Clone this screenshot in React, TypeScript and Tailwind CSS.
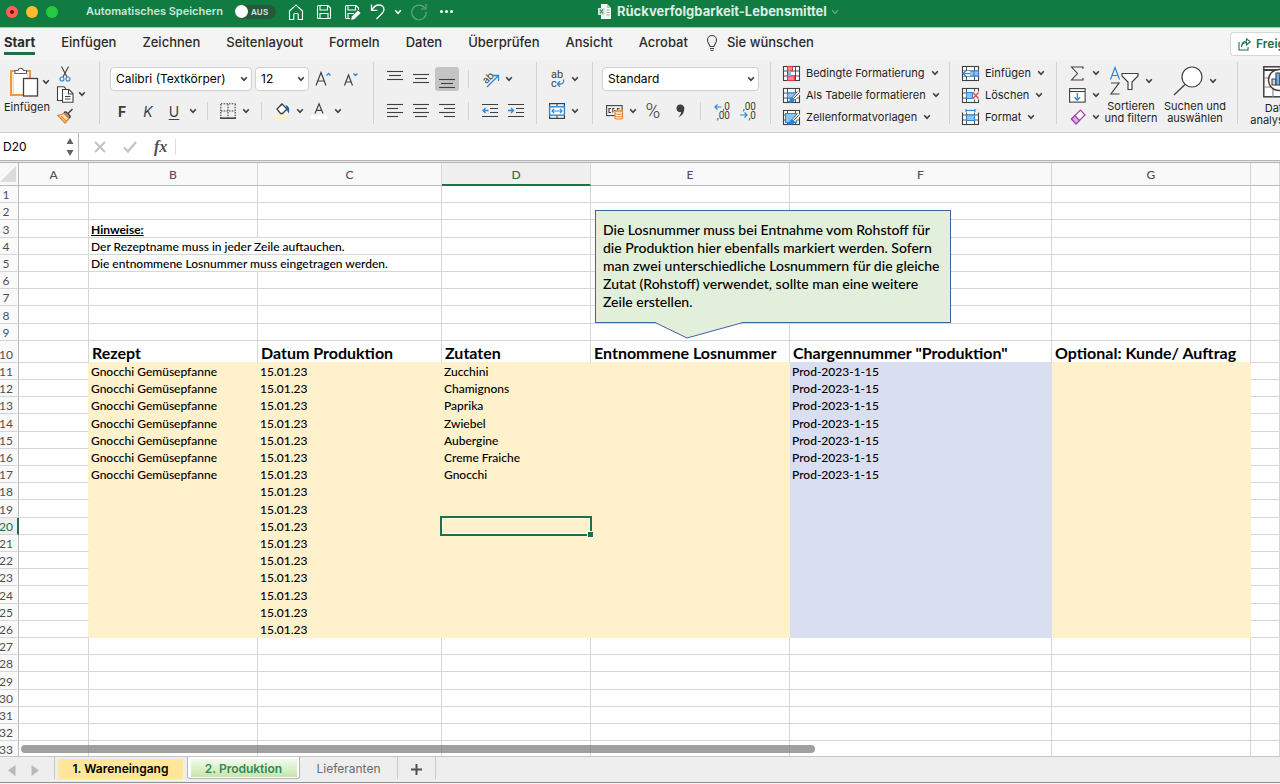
import React from 'react';

type Kids = { children?: React.ReactNode };

const DARK = '#404040';
const BLUE = '#2b88d8';

function Svg({ w, h, className = '', children }: Kids & { w: number; h: number; className?: string }) {
  return (
    <svg
      width={w}
      height={h}
      viewBox={`0 0 ${w} ${h}`}
      fill="none"
      stroke={DARK}
      strokeWidth={1.1}
      className={`shrink-0 overflow-visible ${className}`}
      aria-hidden="true"
    >
      {children}
    </svg>
  );
}

function Chevron({ className = '' }: { className?: string }) {
  return (
    <Svg w={8} h={6} className={className}>
      <path d="M1.2 1.2 4 4.4 6.8 1.2" strokeWidth={1.6} />
    </Svg>
  );
}

function Tool({ label, className = 'w-6', children }: Kids & { label: string; className?: string }) {
  return (
    <button type="button" aria-label={label} className={`flex h-6 shrink-0 items-center justify-center ${className}`}>
      {children}
    </button>
  );
}

function More({ label }: { label: string }) {
  return (
    <Tool label={label} className="w-3">
      <Chevron />
    </Tool>
  );
}

function Rule({ className = 'w-4' }: { className?: string }) {
  return (
    <span className={`flex h-6 shrink-0 items-center justify-center ${className}`}>
      <span className="h-[18px] w-px bg-[#d2d2d2]" />
    </span>
  );
}

function Group({ className = '', children }: Kids & { className?: string }) {
  return <div className={`flex h-[62px] shrink-0 border-r border-[#d2d2d2] ${className}`}>{children}</div>;
}

function Lines({ rows }: { rows: [number, number, number][] }) {
  return (
    <Svg w={16} h={16}>
      {rows.map(([x1, x2, y]) => (
        <path key={y} d={`M${x1} ${y}H${x2}`} />
      ))}
    </Svg>
  );
}

function Dropdown({ label, value, className }: { label: string; value: string; className: string }) {
  return (
    <span className={`relative flex h-6 shrink-0 ${className}`}>
      <select
        aria-label={label}
        defaultValue={value}
        className="h-6 w-full appearance-none rounded-[4px] border border-[#d0d0d0] bg-white pl-[5px] text-[12px] text-black"
      >
        <option>{value}</option>
      </select>
      <Chevron className="pointer-events-none absolute top-[9px] right-1" />
    </span>
  );
}

function TitleBar() {
  return (
    <header className="flex h-7 shrink-0 items-start overflow-hidden border-b border-[#9fcbb1] bg-[#107c41] text-white">
      <div className="flex h-[23px] shrink-0 items-center pl-[6px]">
        <div className="flex gap-2">
          <button type="button" aria-label="Schließen" className="flex size-3 items-center justify-center rounded-full bg-[#ff5f57]">
            <span className="size-1 rounded-full bg-[#7a0c05]" />
          </button>
          <button type="button" aria-label="Minimieren" className="size-3 rounded-full bg-[#febc2e]" />
          <button type="button" aria-label="Maximieren" className="size-3 rounded-full bg-[#28c840]" />
        </div>
        <label htmlFor="autosave" className="ml-7 text-[11px] font-semibold whitespace-nowrap text-[#cfe5d8]">
          Automatisches Speichern
        </label>
        <span className="relative ml-3 flex h-[14px] w-[41px] items-center rounded-full bg-[#24593c]">
          <input id="autosave" type="checkbox" role="switch" className="absolute inset-0 size-full opacity-0" />
          <span className="size-[13px] rounded-full bg-white" />
          <span className="ml-[3px] text-[8px] font-semibold tracking-wide text-[#dbe9e1]">AUS</span>
        </span>
        <div className="ml-3 flex items-center text-white">
          <button type="button" aria-label="Startseite" className="mr-3">
            <Svg w={16} h={16}>
              <path d="M1.500 7 8 1.200 14.500 7v8.500h-4.300V10.500a1 1 0 0 0-1-1H6.800a1 1 0 0 0-1 1v5H1.500z" stroke="#fff" strokeLinejoin="round" />
            </Svg>
          </button>
          <button type="button" aria-label="Sichern" className="mr-3">
            <Svg w={16} h={16}>
              <path d="M1.500 2.500a1 1 0 0 1 1-1h9.500l2.500 2.500v9.500a1 1 0 0 1-1 1h-11a1 1 0 0 1-1-1zM4 1.500v4.500h7.500V1.500M4 14.500V9.500h8v5" stroke="#fff" />
            </Svg>
          </button>
          <button type="button" aria-label="Sichern unter" className="mr-2.5">
            <Svg w={16} h={16}>
              <path d="M14.500 6V4L12 1.500H2.500a1 1 0 0 0-1 1v11a1 1 0 0 0 1 1H6M4 1.500v4.500h7.500V1.500M4 14.500V9.500h6" stroke="#fff" />
              <path d="M7.500 15.500 8.300 12.300 14 6.800l2.300 2.300-5.700 5.600z" fill="#fff" stroke="#fff" strokeWidth={0.6} />
            </Svg>
          </button>
          <button type="button" aria-label="Rückgängig" className="mr-2">
            <Svg w={16} h={18}>
              <path d="M1.500 1.500v5.800h5.800M1.800 7C3.500 4 6 2 9 2c3 0 5 2 5 4.500 0 2-1 3-2.500 4.500L6.500 16" stroke="#fff" strokeWidth={1.3} />
            </Svg>
          </button>
          <button type="button" aria-label="Rückgängig-Liste" className="mr-2">
            <svg width="8" height="6" viewBox="0 0 8 6" fill="none" stroke="#fff" strokeWidth="1.600">
              <path d="M1.200 1.200 4 4.400 6.800 1.200" />
            </svg>
          </button>
          <button type="button" aria-label="Wiederholen" className="mr-3">
            <Svg w={18} h={18}>
              <path d="M14.800 5A7.300 7.300 0 1 0 16.300 9M16 1v5h-5" stroke="#5fa77f" strokeWidth={1.2} />
            </Svg>
          </button>
          <button type="button" aria-label="Mehr" className="flex gap-[2px]">
            <span className="size-[3px] rounded-full bg-white" />
            <span className="size-[3px] rounded-full bg-white" />
            <span className="size-[3px] rounded-full bg-white" />
          </button>
        </div>
      </div>
      <button type="button" className="ml-[145px] flex h-[23px] shrink-0 items-center text-[13px] font-bold whitespace-nowrap text-[#dcede3]">
        <svg width="13" height="15" viewBox="0 0 13 15" className="mr-[6px]" aria-hidden="true">
          <path d="M3 0h6l4 4v11H3z" fill="#f4faf6" />
          <path d="M9 0v4h4z" fill="#a8cdb8" />
          <rect x="0" y="4" width="7" height="7" fill="#cfe3d7" />
          <path d="M2 5.500l3 4M5 5.500l-3 4" stroke="#2d8a57" strokeWidth="1.100" />
          <path d="M8.500 6h3M8.500 8.500h3M8.500 11h3" stroke="#7cb795" />
        </svg>
        Rückverfolgbarkeit-Lebensmittel
        <svg width="8" height="6" viewBox="0 0 8 6" fill="none" stroke="#6fb08c" strokeWidth="1.200" className="ml-1" aria-hidden="true">
          <path d="M1 1.200 4 4.400 7 1.200" />
        </svg>
      </button>
    </header>
  );
}

const ribbonTabs = ['Einfügen', 'Zeichnen', 'Seitenlayout', 'Formeln', 'Daten', 'Überprüfen', 'Ansicht', 'Acrobat'];

function RibbonTabs() {
  return (
    <nav className="flex h-8 shrink-0 items-start gap-[26px] overflow-hidden bg-[#f4f4f4] pl-1 text-[13px] font-medium whitespace-nowrap text-[#2b2b2b]">
      <button type="button" className="h-[27px] border-b-[3px] border-[#1e7145] pt-[5px] font-bold">
        Start
      </button>
      {ribbonTabs.map((tab) => (
        <button key={tab} type="button" className="h-[29px]">
          {tab}
        </button>
      ))}
      <button type="button" className="-ml-2 flex h-[29px] items-center gap-[9px]">
        <Svg w={12} h={18}>
          <path d="M4 12.500c0-2-2.500-3-2.500-6.500a4.500 4.500 0 0 1 9 0c0 3.500-2.500 4.500-2.500 6.500zM4 14.500h4M4.500 16.500h3" />
        </Svg>
        Sie wünschen
      </button>
      <button
        type="button"
        className="mt-1 ml-auto flex h-6 w-[50px] shrink-0 items-center gap-[5px] overflow-hidden rounded-l-[4px] border border-r-0 border-[#d8d8d8] bg-white pl-[7px] text-[12px] font-semibold text-[#1e7145]"
      >
        <Svg w={13} h={13}>
          <path d="M1 4v8h9V9M3.500 9C4 6 6 4.500 8.500 4.500V7L12.300 3.700 8.500.8V3C5.500 3 3.500 5 3.500 9z" stroke="#1e7145" />
        </Svg>
        Freigeben
      </button>
    </nav>
  );
}

function GridIcon({ children }: Kids) {
  return (
    <Svg w={17} h={15}>
      <rect x="0.500" y="0.500" width="16" height="14" fill="#fff" />
      <path d="M.5 5H16.500M.5 10H16.500M4.500.5v14M12.500.5v14" strokeWidth={0.9} />
      {children}
    </Svg>
  );
}

function Brush() {
  return (
    <>
      <path d="M16.500 4 10 10.500" stroke="#fff" strokeWidth={4} />
      <path d="M16.500 4.500 10.500 10.500M14.500 3.500 9.500 9" strokeWidth={1} />
      <path d="M9.500 9.500c-2 0-2.300 1.500-2.500 3-.3 1-1 1.200-2 1.200 2 1 6 1 6.500-2.200z" fill="#2b88d8" stroke="#2472b8" strokeWidth={0.8} />
    </>
  );
}

function ListTool({ icon, text }: { icon: React.ReactNode; text: string }) {
  return (
    <button type="button" className="flex h-[22px] shrink-0 items-center text-[11px] whitespace-nowrap text-[#1f1f1f]">
      {icon}
      <span className="mr-[6px] ml-[6px]">{text}</span>
      <Chevron />
    </button>
  );
}

function Ribbon() {
  return (
    <section className="flex h-[73px] shrink-0 overflow-hidden border-b border-[#cfcfcf] bg-[#f0f0f0] pt-[2px]">
      <Group className="w-[100px]">
        <button type="button" className="flex w-[54px] flex-col items-center pt-1 text-[11px] text-[#1f1f1f]">
          <span className="flex items-center gap-[3px] pl-1">
            <Svg w={30} h={32}>
              <rect x="2" y="5" width="19" height="24" fill="#fff" stroke="#f0963c" strokeWidth={2} />
              <path d="M4.200 7v21M18.800 7v21" stroke="#fbdca8" strokeWidth={1.5} />
              <path d="M6 7.500V4.500h3a2.800 2.800 0 0 1 5.500 0h3v3z" fill="#fff" stroke="#606060" />
              <rect x="14.500" y="12.500" width="14" height="17.500" fill="#fff" strokeWidth={1.3} />
            </Svg>
            <Chevron />
          </span>
          <span className="mt-[3px] leading-3">Einfügen</span>
        </button>
        <div className="flex flex-col">
          <Tool label="Ausschneiden" className="w-[22px]">
            <Svg w={12} h={16}>
              <path d="M2.500.5 8 11M9.500.5 4 11" />
              <circle cx="3" cy="13" r="2" stroke={BLUE} />
              <circle cx="9" cy="13" r="2" stroke={BLUE} />
            </Svg>
          </Tool>
          <div className="-mt-1 flex">
            <Tool label="Kopieren" className="w-[22px]">
              <Svg w={18} h={17}>
                <path d="M6 14.500H1.500V.8H8l2 2" fill="#fff" />
                <path d="M6.500 3.500H13l4 4v8.700H6.500z" fill="#fff" />
                <path d="M12.500 3.500V8H17M9 10.500h5.500M9 13h5.500" />
              </Svg>
            </Tool>
            <More label="Kopieroptionen" />
          </div>
          <Tool label="Format übertragen" className="-mt-0.5 w-[22px]">
            <Svg w={17} h={16}>
              <path d="M15.500 1 11 5.500M8.500 3.500l5 5M7 5l5 5 1.500-1.500M7 5 8.500 3.500" strokeWidth={1.5} />
              <path d="M7 5.500 1 7.500l7 7.500 4-4.500z" fill="#fde3c4" stroke="#e8852a" strokeWidth={1.3} />
              <path d="m4 8 5 5" stroke="#e8852a" />
            </Svg>
          </Tool>
        </div>
      </Group>

      <Group className="w-[274px] flex-col gap-2 pt-[5px] pl-[9px]">
        <div className="flex pl-[1px]">
          <Dropdown label="Schriftart" value="Calibri (Textkörper)" className="w-[142px]" />
          <Dropdown label="Schriftgrad" value="12" className="ml-[3px] w-[54px]" />
          <Tool label="Schrift vergrößern" className="w-7">
            <Svg w={16} h={16}>
              <path d="M1 14.500 6 1.500l5 13M2.800 10h6.400" strokeWidth={1.2} />
              <path d="m11.500 4.500 2-2 2 2" stroke={BLUE} strokeWidth={1.3} />
            </Svg>
          </Tool>
          <Tool label="Schrift verkleinern" className="w-7">
            <Svg w={16} h={16}>
              <path d="M1.500 14.500 5.500 4l4 10.500M3 11h5" strokeWidth={1.2} />
              <path d="m10.500 2.500 2 2 2-2" stroke={BLUE} strokeWidth={1.3} />
            </Svg>
          </Tool>
        </div>
        <div className="flex text-[14px] text-[#404040]">
          <Tool label="Fett" className="w-[26px] font-bold">F</Tool>
          <Tool label="Kursiv" className="w-[26px] italic">K</Tool>
          <Tool label="Unterstrichen" className="w-[26px] underline underline-offset-2">U</Tool>
          <More label="Unterstreichungsarten" />
          <Rule className="w-[17px]" />
          <Tool label="Rahmen">
            <Svg w={16} h={16}>
              <path d="M1 .8H15.500M.8 1V15M15.200 1V15M8 1V15M1 8H15" strokeDasharray="1.500 1.200" />
              <path d="M0 15.200H16" strokeWidth={1.6} />
            </Svg>
          </Tool>
          <More label="Rahmenoptionen" />
          <Rule className="w-[18px]" />
          <Tool label="Füllfarbe">
            <Svg w={16} h={16}>
              <path d="m3 6 5-5 5 5-4.500 4.500H6.500z" fill="#fff" strokeWidth={1.3} />
              <path d="M6 3 8 1" />
              <path d="M12.500 3c2 1 2.500 3 2 6-1-1.500-1.500-2.500-1.500-4z" fill="#1d5fa8" stroke="#1d5fa8" />
              <rect x="0" y="12.500" width="16" height="3.500" fill="#fdefc4" stroke="none" />
            </Svg>
          </Tool>
          <More label="Füllfarben" />
          <Tool label="Schriftfarbe" className="w-[26px]">
            <Svg w={16} h={16}>
              <path d="M4 10.500 8 .8l4 9.700M5.500 7.300h5" strokeWidth={1.2} />
              <rect x="0" y="12.500" width="16" height="3.500" fill="#fff" stroke="none" />
            </Svg>
          </Tool>
          <More label="Schriftfarben" />
        </div>
      </Group>

      <Group className="w-[163px] flex-col gap-2 pt-[5px] pl-[9px]">
        <div className="flex">
          <div className="flex gap-0.5">
            <Tool label="Oben ausrichten">
              <Lines rows={[[0, 16, 0.5], [2, 14, 4.5], [0, 16, 8.5]]} />
            </Tool>
            <Tool label="Zentriert ausrichten">
              <Lines rows={[[0, 16, 3.5], [2, 14, 7.5], [0, 16, 11.5]]} />
            </Tool>
            <Tool label="Unten ausrichten" className="w-6 rounded-[3px] bg-[#c4c4c4]">
              <Lines rows={[[0, 16, 8.5], [2, 14, 12.5], [0, 16, 16.5]]} />
            </Tool>
          </div>
          <Rule className="w-[18px]" />
          <Tool label="Ausrichtung" className="w-[26px]">
            <Svg w={18} h={18}>
              <text x="1" y="12" fontSize="10" fill={DARK} stroke="none" transform="rotate(-45 6 8)">ab</text>
              <path d="M6 17 17 6M12 5.500h5.500v5.500" stroke={BLUE} strokeWidth={1.3} />
            </Svg>
          </Tool>
          <More label="Ausrichtungsoptionen" />
        </div>
        <div className="flex">
          <div className="flex gap-0.5">
            <Tool label="Linksbündig">
              <Lines rows={[[0, 16, 1.5], [0, 11, 5.5], [0, 16, 9.5], [0, 11, 13.5]]} />
            </Tool>
            <Tool label="Zentriert">
              <Lines rows={[[0, 16, 1.5], [2, 14, 5.5], [0, 16, 9.5], [2, 14, 13.5]]} />
            </Tool>
            <Tool label="Rechtsbündig">
              <Lines rows={[[0, 16, 1.5], [5, 16, 5.5], [0, 16, 9.5], [5, 16, 13.5]]} />
            </Tool>
          </div>
          <Rule className="w-[18px]" />
          <Tool label="Einzug verkleinern" className="w-[26px]">
            <Svg w={16} h={16}>
              <path d="M0 1.500H16M8 5.500h8M8 9.500h8M0 13.500H16" />
              <path d="M6.500 7.500H1M3.500 5 1 7.500 3.500 10" stroke={BLUE} strokeWidth={1.3} />
            </Svg>
          </Tool>
          <Tool label="Einzug vergrößern" className="w-[26px]">
            <Svg w={16} h={16}>
              <path d="M0 1.500H16M8 5.500h8M8 9.500h8M0 13.500H16" />
              <path d="M0 7.500H5.500M3 5l2.500 2.500L3 10" stroke={BLUE} strokeWidth={1.3} />
            </Svg>
          </Tool>
        </div>
      </Group>

      <Group className="w-14 flex-col gap-2 pt-[5px] pl-2">
        <div className="flex">
          <Tool label="Textumbruch">
            <Svg w={16} h={18}>
              <text x="2" y="8" fontSize="11" fill={DARK} stroke="none" className="font-['Roboto',sans-serif]">
                ab
              </text>
              <text x="2" y="17" fontSize="11" fill={DARK} stroke="none" className="font-['Roboto',sans-serif]">
                c
              </text>
              <path d="M14.500 9.500c1 3-1 4.500-3 4.500H8.500M11 11.300 8.300 14l2.700 2.700" stroke={BLUE} strokeWidth={1.3} />
            </Svg>
          </Tool>
          <More label="Umbruchoptionen" />
        </div>
        <div className="flex">
          <Tool label="Verbinden">
            <Svg w={16} h={16}>
              <rect x="0.600" y="0.600" width="14.800" height="14.800" strokeWidth={1.2} />
              <path d="M8 .5v3M8 12.500v3" />
              <rect x="0.600" y="3.800" width="14.800" height="8.400" fill="#fff" stroke={BLUE} strokeWidth={1.4} />
              <path d="M3 8h10M5 6 3 8l2 2M11 6l2 2-2 2" stroke={BLUE} />
            </Svg>
          </Tool>
          <More label="Verbindungsoptionen" />
        </div>
      </Group>

      <Group className="w-[178px] flex-col gap-2 pt-[5px] pl-[9px]">
        <Dropdown label="Zahlenformat" value="Standard" className="w-[157px]" />
        <div className="flex text-[#404040]">
          <Tool label="Währung" className="w-[25px]">
            <Svg w={18} h={16}>
              <rect x="0.600" y="2.600" width="15.500" height="10" />
              <path d="M5 5.500H3v4h2M8.500 5.500H6.800v4M8 7.500h2M13.500 5.500h-2v3" />
              <path d="M9 8c0-1.300 7.500-1.300 7.500 0v7c0 1.300-7.500 1.300-7.500 0z" fill="#fff" stroke="#ed8733" strokeWidth={1.2} />
              <path d="M9 10.500c2 1 5.500 1 7.500 0M9 13c2 1 5.500 1 7.500 0M9 8c2 1 5.500 1 7.500 0" stroke="#ed8733" strokeWidth={1.2} />
            </Svg>
          </Tool>
          <More label="Währungen" />
          <Tool label="Prozent" className="w-7 font-['Roboto',sans-serif] text-[20px] font-light">%</Tool>
          <Tool label="Tausendertrennzeichen" className="w-[26px]">
            <svg width="9" height="14" viewBox="0 0 9 14" fill={DARK} aria-hidden="true">
              <path d="M4 .5a3.700 3.700 0 0 1 4.300 4c0 4.500-2.500 7.500-6.300 9 2-2 3-3.500 3-5.500C2 8.800.5 6.500.5 4.300A3.500 3.500 0 0 1 4 .5z" />
            </svg>
          </Tool>
          <Rule className="w-[15px]" />
          <Tool label="Dezimalstelle hinzufügen" className="w-[27px]">
            <Svg w={16} h={16}>
              <text x="16" y="7" fontSize="10" textAnchor="end" fill={DARK} stroke="none" className="font-['Roboto',sans-serif]">
                ,0
              </text>
              <text x="16" y="16" fontSize="10" textAnchor="end" fill={DARK} stroke="none" className="font-['Roboto',sans-serif]">
                ,00
              </text>
              <path d="M7.500 4H1M3.500 1.500 1 4l2.500 2.500" stroke={BLUE} strokeWidth={1.2} />
            </Svg>
          </Tool>
          <Tool label="Dezimalstelle entfernen" className="w-[26px]">
            <Svg w={16} h={16}>
              <text x="16" y="7" fontSize="10" textAnchor="end" fill={DARK} stroke="none" className="font-['Roboto',sans-serif]">
                ,00
              </text>
              <text x="16" y="16" fontSize="10" textAnchor="end" fill={DARK} stroke="none" className="font-['Roboto',sans-serif]">
                ,0
              </text>
              <path d="M0 12H7M4.500 9.500 7 12l-2.500 2.500" stroke={BLUE} strokeWidth={1.2} />
            </Svg>
          </Tool>
        </div>
      </Group>

      <Group className="w-[179px] flex-col pl-3">
        <ListTool
          text="Bedingte Formatierung"
          icon={
            <GridIcon>
              <path d="M4.500.5h5v4.500h-5zM4.500 10h7v4.500h-7z" fill="#f58b8b" stroke="#d9363e" />
              <path d="M5 5h3v5H5z" fill="#7ab8ec" stroke="none" />
            </GridIcon>
          }
        />
        <ListTool
          text="Als Tabelle formatieren"
          icon={
            <GridIcon>
              <path d="M4.500 5h8v5h-8z" fill="#8cc4f2" stroke={BLUE} />
              <Brush />
            </GridIcon>
          }
        />
        <ListTool
          text="Zellenformatvorlagen"
          icon={
            <GridIcon>
              <path d="M2.500 3.500h11v9h-11z" fill="#8cc4f2" stroke={BLUE} />
              <Brush />
            </GridIcon>
          }
        />
      </Group>

      <Group className="w-[107px] flex-col pl-3">
        <ListTool
          text="Einfügen"
          icon={
            <GridIcon>
              <path d="M7 5h9.500v5H7z" fill="#8cc4f2" stroke={BLUE} />
              <path d="M8 7.500H1" stroke="#f0f0f0" strokeWidth={5} />
              <path d="M8.500 7.500H1M4 4.500l-3 3 3 3M12 5v5" stroke={BLUE} strokeWidth={1.2} />
            </GridIcon>
          }
        />
        <ListTool
          text="Löschen"
          icon={
            <GridIcon>
              <path d="M4.500 4.500h6v6h-6z" fill="#8cc4f2" stroke={BLUE} />
              <path d="M11 3.500h6.500v8H11z" fill="#f0f0f0" stroke="none" />
              <path d="m11 4.500 5.500 6M16.500 4.500l-5.500 6" stroke="#e5484d" strokeWidth={1.3} />
            </GridIcon>
          }
        />
        <ListTool
          text="Format"
          icon={
            <GridIcon>
              <path d="M0 0h17v2.500H0z" fill="#f0f0f0" stroke="none" />
              <path d="M4.500 5h8v5.500h-8z" fill="#8cc4f2" stroke={BLUE} />
              <path d="M4 .5h9M4-1v3M13-1v3" stroke={BLUE} />
            </GridIcon>
          }
        />
      </Group>

      <Group className="w-[181px] pl-2">
        <div className="flex flex-col">
          <div className="flex h-[22px] shrink-0 items-center">
            <Tool label="Summe" className="w-[25px]">
              <Svg w={15} h={15}>
                <path d="M13 3V1H1.500L7.500 7.500 1.500 14H13v-2" />
              </Svg>
            </Tool>
            <More label="Summenfunktionen" />
          </div>
          <div className="flex h-[22px] shrink-0 items-center">
            <Tool label="Ausfüllen" className="w-[25px]">
              <Svg w={17} h={15}>
                <rect x="0.600" y="0.600" width="15.500" height="13.500" fill="#fff" />
                <path d="M.5 3.500H16" />
                <path d="M8.300 5v7M5.500 9.300 8.300 12l2.800-2.700" stroke={BLUE} strokeWidth={1.3} />
              </Svg>
            </Tool>
            <More label="Ausfülloptionen" />
          </div>
          <div className="flex h-[22px] shrink-0 items-center">
            <Tool label="Löschen" className="w-[25px]">
              <Svg w={16} h={16}>
                <path d="m1.500 10 9-9 4.500 5-9 9z" fill="#fff" stroke="#a33fb0" strokeWidth={1.2} />
                <path d="m1.500 10 3.500-3.500L9.500 11.500 6 15z" fill="#dfaee6" stroke="#a33fb0" strokeWidth={1.2} />
              </Svg>
            </Tool>
            <More label="Löschoptionen" />
          </div>
        </div>
        <button type="button" className="flex w-[58px] flex-col items-center text-[11px] leading-3 text-[#1f1f1f]">
          <span className="flex h-10 items-center gap-[6px]">
            <Svg w={30} h={30}>
              <path d="m1.500 13.500 4.500-12 4.500 12M3 9.500h6" stroke={BLUE} strokeWidth={1.2} />
              <path d="M2 17h8L2 28h8.500" strokeWidth={1.2} />
              <path d="M13 7.500h16V10l-6 6v7.500h-4V16l-6-6z" fill="#fff" strokeWidth={1.2} />
            </Svg>
            <Chevron />
          </span>
          <span className="whitespace-nowrap">Sortieren</span>
          <span className="whitespace-nowrap">und filtern</span>
        </button>
        <button type="button" className="ml-[2px] flex w-[66px] flex-col items-center text-[11px] leading-3 text-[#1f1f1f]">
          <span className="flex h-10 items-center gap-[6px]">
            <Svg w={30} h={30}>
              <circle cx="19" cy="11" r="10" fill="#fff" strokeWidth={1.2} />
              <path d="M12 18.500 1 29" strokeWidth={1.3} />
            </Svg>
            <Chevron />
          </span>
          <span className="whitespace-nowrap">Suchen und</span>
          <span className="whitespace-nowrap">auswählen</span>
        </button>
      </Group>

      <button type="button" className="ml-[11px] flex w-[62px] shrink-0 flex-col items-center text-[11px] leading-3 text-[#1f1f1f]">
        <span className="flex h-10 items-center pl-1">
          <Svg w={38} h={32}>
            <rect x="0.800" y="0.800" width="34" height="30" fill="#fff" strokeWidth={1.5} />
            <path d="M1 4h34" strokeWidth={2} />
            <path d="M1 12h34M1 21h34M10 5v26M24 5v26" stroke="#808080" />
            <circle cx="16" cy="14" r="10.500" fill="#fff" strokeWidth={1.4} />
            <path d="M9 13h4v6H9z" fill="#d0d0d0" />
            <path d="M13 7h4v12h-4z" fill="#6fb2ea" />
            <path d="M17 10h4v9h-4z" fill="#fff" />
          </Svg>
        </span>
        <span>Daten</span>
        <span>analysieren</span>
      </button>
    </section>
  );
}

function FormulaBar() {
  return (
    <section className="flex h-[30px] shrink-0 flex-col bg-white">
      <div className="flex flex-1 items-center">
        <div className="flex h-full w-[79px] items-center border-r border-[#b5b5b5] pr-1">
          <input
            aria-label="Namenfeld"
            defaultValue="D20"
            className="w-full min-w-0 flex-1 bg-transparent pl-[3px] text-[12px] text-black outline-none"
          />
          <svg width="8" height="18" viewBox="0 0 8 18" fill="#636363" aria-hidden="true">
            <path d="M4 0l3.500 6h-7zM4 18l3.500-6h-7z" />
          </svg>
        </div>
        <div className="flex items-center gap-[17px] border-r border-[#dcdcdc] pr-2 pl-[15px]">
          <button type="button" aria-label="Abbrechen">
            <svg width="12" height="12" viewBox="0 0 12 12" stroke="#c2c2c2" strokeWidth="2" aria-hidden="true">
              <path d="M1 1l10 10M11 1 1 11" />
            </svg>
          </button>
          <button type="button" aria-label="Eingeben">
            <svg width="14" height="12" viewBox="0 0 14 12" fill="none" stroke="#c2c2c2" strokeWidth="2.200" aria-hidden="true">
              <path d="M1 6.500 5 10.500 13 1" />
            </svg>
          </button>
          <button type="button" className="font-['Liberation_Serif',serif] text-[16px] leading-4 font-bold text-[#505050] italic">
            fx
          </button>
        </div>
        <input aria-label="Bearbeitungsleiste" className="h-full flex-1 bg-transparent px-2 text-[12px] outline-none" />
      </div>
      <div className="h-[3px] border-y border-[#b5b5b5] bg-[#e6e6e6]" />
    </section>
  );
}

const columns = ['A', 'B', 'C', 'D', 'E', 'F', 'G', ''];

const cells: Record<string, string> = {
  B3: 'Hinweise:',
  B4: 'Der Rezeptname muss in jeder Zeile auftauchen.',
  B5: 'Die entnommene Losnummer muss eingetragen werden.',
  B10: 'Rezept',
  C10: 'Datum Produktion',
  D10: 'Zutaten',
  E10: 'Entnommene Losnummer',
  F10: 'Chargennummer "Produktion"',
  G10: 'Optional: Kunde/ Auftrag',
};
['Zucchini', 'Chamignons', 'Paprika', 'Zwiebel', 'Aubergine', 'Creme Fraiche', 'Gnocchi'].forEach((item, i) => {
  cells[`B${11 + i}`] = 'Gnocchi Gemüsepfanne';
  cells[`D${11 + i}`] = item;
  cells[`F${11 + i}`] = 'Prod-2023-1-15';
});
for (let r = 11; r <= 26; r++) cells[`C${r}`] = '15.01.23';

// Regular rows are a little over 17px tall; every fifth one takes up the remainder.
function rowHeight(r: number) {
  if (r === 10) return 'h-[22px]';
  const n = r < 10 ? r : r - 11;
  return n % 5 === 3 ? 'h-[18px]' : 'h-[17px]';
}

function cellStyle(col: string, r: number) {
  const filled = r >= 11 && r <= 26;
  const inTable = 'BCDEFG'.includes(col) && col !== '';
  if (filled && inTable) {
    return col === 'F' ? 'bg-[#d9dff1] border-[#d9dff1]' : 'bg-[#fff1cc] border-[#fff1cc]';
  }
  if (filled && col === 'A') return 'border-b-[#d6d6d6] border-r-[#fff1cc]';
  if (r === 10 && inTable) {
    return col === 'F' ? 'border-r-[#d6d6d6] border-b-[#d9dff1]' : 'border-r-[#d6d6d6] border-b-[#fff1cc]';
  }
  if ((r === 4 || r === 5) && col === 'B') return 'border-b-[#d6d6d6] border-r-transparent';
  return 'border-[#d6d6d6]';
}

function textStyle(r: number) {
  if (r === 10) return 'pl-[3px] pt-[2px] text-[16px] leading-4 font-bold';
  if (r === 3) return 'pl-[2px] pt-[2px] text-[12px] leading-[14px] font-bold underline';
  return 'pl-[2px] pt-[2px] text-[12px] leading-[14px] font-medium';
}

function Sheet() {
  return (
    <main className="relative min-h-0 flex-1 overflow-hidden bg-white">
      <table className="w-full table-fixed border-separate border-spacing-0 font-['Lato',sans-serif] text-black">
        <colgroup>
          <col className="w-[19px]" />
          <col className="w-[70px]" />
          <col className="w-[169px]" />
          <col className="w-[184px]" />
          <col className="w-[149px]" />
          <col className="w-[199px]" />
          <col className="w-[262px]" />
          <col className="w-[199px]" />
          <col />
        </colgroup>
        <thead>
          <tr className="h-[23px]">
            <th className="border-r border-b border-[#b9b9b9] bg-[#f8f8f8] p-0">
              <svg width="18" height="16" viewBox="0 0 18 16" aria-hidden="true">
                <path d="M16 0v16H0z" fill="#dcdcdc" />
              </svg>
            </th>
            {columns.map((c) => (
              <th
                key={c}
                scope="col"
                className={
                  c === 'D'
                    ? 'border-r border-b-2 border-r-[#d6d6d6] border-b-[#1e7145] bg-[#efefef] px-0 pt-[3px] pb-0 text-[12px] leading-4 font-medium text-[#1e7145]'
                    : 'border-r border-b border-r-[#d6d6d6] border-b-[#b9b9b9] bg-[#f9f9f9] px-0 pt-[2px] pb-0 text-[12px] leading-4 font-medium text-[#505050]'
                }
              >
                {c}
              </th>
            ))}
          </tr>
        </thead>
        <tbody>
          {Array.from({ length: 33 }, (_, i) => i + 1).map((r) => (
            <tr key={r} className={rowHeight(r)}>
              <th
                scope="row"
                className={
                  r === 20
                    ? 'border-r-2 border-b border-r-[#1e7145] border-b-[#d6d6d6] bg-[#efefef] px-0 pt-[2px] pb-0 align-bottom text-[12px] leading-[14px] font-normal text-[#1e7145]'
                    : 'border-r border-b border-r-[#b9b9b9] border-b-[#d6d6d6] bg-[#fafafa] px-0 pt-[2px] pb-0 align-bottom text-[12px] leading-[14px] font-normal text-[#505050]'
                }
              >
                <span className="flex w-3 justify-center">{r}</span>
              </th>
              {columns.map((c) => (
                <td
                  key={c}
                  className={`relative border-r border-b pr-0 pb-0 whitespace-nowrap ${cellStyle(c, r)} ${textStyle(r)}`}
                >
                  {cells[`${c}${r}`]}
                  {c === 'D' && r === 20 && (
                    <span className="absolute -inset-x-[2px] -inset-y-[2px] z-10 border-2 border-[#1e7145]">
                      <span className="block size-full border border-white" />
                      <span className="absolute -right-[4px] -bottom-[4px] size-[7px] border border-white bg-[#1e7145]" />
                    </span>
                  )}
                </td>
              ))}
            </tr>
          ))}
        </tbody>
      </table>

      <div className="absolute top-[47px] left-[595px] h-[113px] w-[356px] border border-[#3f63a0] bg-[#e2efda] py-[10px] pl-[7px] font-['Lato',sans-serif] text-[14px] leading-[18px] font-medium text-black">
        <p>
          Die Losnummer muss bei Entnahme vom Rohstoff für
          <br />
          die Produktion hier ebenfalls markiert werden. Sofern
          <br />
          man zwei unterschiedliche Losnummern für die gleiche
          <br />
          Zutat (Rohstoff) verwendet, sollte man eine weitere
          <br />
          Zeile erstellen.
        </p>
        <svg width="90" height="18" viewBox="0 0 90 18" className="absolute top-[110px] left-[58px]" aria-hidden="true">
          <path d="M1 0v1.500L33 17 89 1.500V0z" fill="#e2efda" />
          <path d="M1 1.500 33 17 89 1.500" fill="none" stroke="#3f63a0" />
        </svg>
      </div>

      <div className="absolute bottom-[3px] left-[21px] h-2 w-[62%] rounded-full bg-[#808080]/75" />
    </main>
  );
}

function SheetTabs() {
  return (
    <footer className="flex h-7 shrink-0 flex-col border-t border-[#c6c6c6] bg-[#eeeeee]">
      <div className="flex h-[25px] items-start text-[12px] whitespace-nowrap">
        <div className="flex h-[22px] w-[55px] items-center gap-[15px] border-r border-[#c9c9c9] pt-1 pl-2">
          <button type="button" aria-label="Vorheriges Blatt">
            <svg width="8" height="11" viewBox="0 0 8 11" fill="#b8b8b8" aria-hidden="true">
              <path d="M7.500 0v11L0 5.500z" />
            </svg>
          </button>
          <button type="button" aria-label="Nächstes Blatt">
            <svg width="8" height="11" viewBox="0 0 8 11" fill="#b8b8b8" aria-hidden="true">
              <path d="M.5 0v11L8 5.500z" />
            </svg>
          </button>
        </div>
        <button type="button" className="mt-[2px] ml-[3px] h-5 w-[125px] bg-[#ffe699] font-semibold text-black">
          1. Wareneingang
        </button>
        <div className="ml-1 flex h-[22px] w-[113px] justify-center rounded-b-[3px] border-x border-b border-[#b5b5b5] bg-white">
          <button type="button" className="mt-[2px] h-[18px] w-[106px] bg-linear-to-b from-[#f3faee] to-[#c6e5ab] pt-px font-semibold text-[#2e8b57]">
            2. Produktion
          </button>
        </div>
        <button type="button" className="h-[22px] w-[98px] border-r border-[#c9c9c9] pt-[2px] text-[#6b6b6b]">
          Lieferanten
        </button>
        <button type="button" aria-label="Blatt hinzufügen" className="flex h-[22px] w-[38px] items-center justify-center border-r border-[#c9c9c9] pt-[2px]">
          <svg width="11" height="11" viewBox="0 0 11 11" stroke="#505050" strokeWidth="2" aria-hidden="true">
            <path d="M5.500 0v11M0 5.500h11" />
          </svg>
        </button>
      </div>
      <div className="flex-1 border-t border-[#8f8f8f] bg-[#f4f4f4]" />
    </footer>
  );
}

export default function App() {
  return (
    <div className="flex h-screen flex-col overflow-hidden bg-white font-['Inter','Liberation_Sans',sans-serif]">
      <TitleBar />
      <RibbonTabs />
      <Ribbon />
      <FormulaBar />
      <Sheet />
      <SheetTabs />
    </div>
  );
}
